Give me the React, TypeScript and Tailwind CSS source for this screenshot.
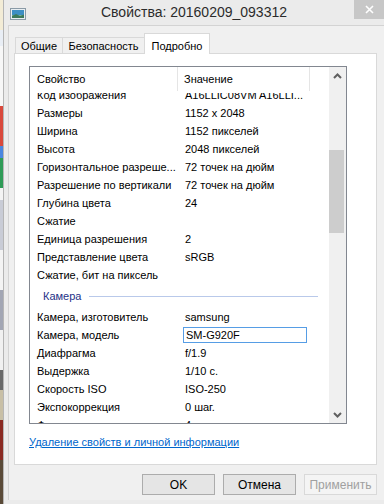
import React from "react";

const topRows: [string, string][] = [
  ["Код изображения", "A16LLIC08VM A16LLI..."],
  ["Размеры", "1152 x 2048"],
  ["Ширина", "1152 пикселей"],
  ["Высота", "2048 пикселей"],
  ["Горизонтальное разреше...", "72 точек на дюйм"],
  ["Разрешение по вертикали", "72 точек на дюйм"],
  ["Глубина цвета", "24"],
  ["Сжатие", ""],
  ["Единица разрешения", "2"],
  ["Представление цвета", "sRGB"],
  ["Сжатие, бит на пиксель", ""],
];

const cameraRows: [string, string][] = [
  ["Камера, изготовитель", "samsung"],
  ["Камера, модель", "SM-G920F"],
  ["Диафрагма", "f/1.9"],
  ["Выдержка", "1/10 с."],
  ["Скорость ISO", "ISO-250"],
  ["Экспокоррекция", "0 шаг."],
  ["Фокусное расстояние", "4 мм"],
];

function Row({ name, value, editing }: { name: string; value: string; editing?: boolean }) {
  return (
    <div className="flex h-[18px] items-center text-[11px] text-black">
      <div className="w-[148px] pl-[7px] whitespace-nowrap overflow-hidden">{name}</div>
      {editing ? (
        <div className="ml-[5px] w-[124px] h-[16px] border border-[#569de5] bg-white pl-[2px] leading-[14px]">
          {value}
        </div>
      ) : (
        <div className="pl-[7px] whitespace-nowrap">{value}</div>
      )}
    </div>
  );
}

function Chevron({ up }: { up?: boolean }) {
  return (
    <svg width="9" height="6" viewBox="0 0 9 6">
      <path
        d={up ? "M1 5 L4.5 1.5 L8 5" : "M1 1 L4.5 4.5 L8 1"}
        fill="none"
        stroke="#606060"
        strokeWidth="2"
      />
    </svg>
  );
}

function DesktopStrip() {
  return (
    <div className="w-[3px] flex flex-col shrink-0">
      <div className="h-[30px] bg-[#f3ecd6]" />
      <div className="h-[16px] bg-[#e9eef5]" />
      <div className="h-[60px] bg-[#f7f7f7]" />
      <div className="h-[40px] bg-[#d9493c]" />
      <div className="h-[12px] bg-[#4a86e0]" />
      <div className="h-[30px] bg-[#2f9b57]" />
      <div className="h-[12px] bg-[#f4f4f4]" />
      <div className="h-[50px] bg-[#c9ccd6]" />
      <div className="h-[40px] bg-[#f4f4f4]" />
      <div className="h-[40px] bg-[#a2a6b4]" />
      <div className="h-[40px] bg-[#f1f1f1]" />
      <div className="h-[20px] bg-[#6a6a6a]" />
      <div className="h-[30px] bg-[#c8bfa6]" />
      <div className="h-[40px] bg-[#8a2a22]" />
      <div className="flex-1 bg-[#5a4a38]" />
    </div>
  );
}

export default function App() {
  return (
    <div className="flex w-[384px] h-[504px] overflow-hidden font-['Liberation_Sans',Arial,sans-serif]">
      <DesktopStrip />
      <div className="flex-1 flex flex-col bg-[#ebebeb] border-l border-[#b5b5b5]">
        {/* заголовок */}
        <div className="h-[25px] flex items-start shrink-0">
          <div className="w-[30px] pl-[6px] pt-[8px]">
            <svg width="16" height="12" viewBox="0 0 16 12">
              <rect x="0.5" y="0.5" width="15" height="11" fill="#e8eef2" stroke="#8a9aa6" />
              <rect x="2" y="2" width="12" height="5" fill="#3d8fc4" />
              <rect x="2" y="7" width="12" height="3" fill="#7fb9a0" />
              <path d="M2 8 L6 6 L10 8 L14 6.5 V10 H2 Z" fill="#3c7a5c" />
            </svg>
          </div>
          <div className="flex-1 text-center text-[14px] leading-[25px] text-[#2b2b2b]">
            Свойства: 20160209_093312
          </div>
          <div className="w-[30px] h-[19px] bg-[#c7c7c7] flex items-center justify-center">
            <svg width="9" height="9" viewBox="0 0 9 9">
              <path d="M1 1 L8 8 M8 1 L1 8" stroke="#ffffff" strokeWidth="1.6" />
            </svg>
          </div>
        </div>

        {/* клиентская область */}
        <div className="flex-1 ml-[4px] mb-[4px] border-t border-l border-[#d3d3d3] bg-[#f0f0f0] flex flex-col">
          {/* вкладки */}
          <div className="flex items-end pl-[6px] pt-[7px] h-[28px] text-[11px]">
            <div className="w-[48px] h-[17px] border border-b-0 border-[#d9d9d9] bg-[#f0f0f0] flex items-center justify-center text-black">
              Общие
            </div>
            <div className="w-[83px] h-[17px] -ml-px border border-b-0 border-[#d9d9d9] bg-[#f0f0f0] flex items-center justify-center text-black">
              Безопасность
            </div>
            <div className="relative z-10 w-[66px] h-[21px] -ml-px border border-b-0 border-[#d9d9d9] bg-white flex items-start justify-center pt-[4px] text-black">
              Подробно
            </div>
          </div>

          {/* панель */}
          <div className="ml-[5px] -mt-px w-[363px] h-[412px] border border-[#d9d9d9] bg-white flex flex-col">
            <div className="ml-[14px] mt-[12px] w-[318px] h-[358px] border border-[#828790] flex">
              <div className="flex-1 flex flex-col overflow-hidden">
                <div className="h-[26px] pb-[2px] flex items-center text-[11px] text-black relative z-10 bg-white">
                  <div className="w-[148px] pl-[7px] h-full flex items-center border-r border-[#e5e5e5]">Свойство</div>
                  <div className="w-[132px] pl-[6px] h-full flex items-center border-r border-[#e5e5e5]">Значение</div>
                </div>
                <div className="flex-1 overflow-hidden">
                  <div className="-mt-[7px]">
                    {topRows.map(([n, v]) => (
                      <Row key={n} name={n} value={v} />
                    ))}
                    <div className="h-[24px] flex items-center pl-[13px] pr-[11px]">
                      <span className="text-[11px] text-[#1e3287]">Камера</span>
                      <div className="ml-[8px] flex-1 h-px bg-[#b9c9ea]" />
                    </div>
                    {cameraRows.map(([n, v]) => (
                      <Row key={n} name={n} value={v} editing={n === "Камера, модель"} />
                    ))}
                  </div>
                </div>
              </div>
              {/* полоса прокрутки */}
              <div className="w-[17px] bg-[#f0f0f0] flex flex-col">
                <div className="h-[17px] flex items-center justify-center">
                  <Chevron up />
                </div>
                <div className="flex-1">
                  <div className="mt-[66px] w-[15px] h-[83px] bg-[#cdcdcd]" />
                </div>
                <div className="h-[17px] flex items-center justify-center">
                  <Chevron />
                </div>
              </div>
            </div>
            <div className="ml-[14px] mt-[11px] text-[11px] leading-[15px] text-[#0066cc] underline">
              Удаление свойств и личной информации
            </div>
          </div>

          {/* кнопки */}
          <div className="ml-[5px] w-[363px] mt-[9px] flex justify-end gap-[8px] text-[12px]">
            <div className="w-[73px] h-[21px] border border-[#acacac] bg-[#e5e5e5] flex items-center justify-center text-black">
              OK
            </div>
            <div className="w-[73px] h-[21px] border border-[#acacac] bg-[#e5e5e5] flex items-center justify-center text-black">
              Отмена
            </div>
            <div className="w-[73px] h-[21px] border border-[#d9d9d9] bg-[#f4f4f4] flex items-center justify-center text-[#a0a0a0]">
              Применить
            </div>
          </div>
        </div>
      </div>
    </div>
  );
}
